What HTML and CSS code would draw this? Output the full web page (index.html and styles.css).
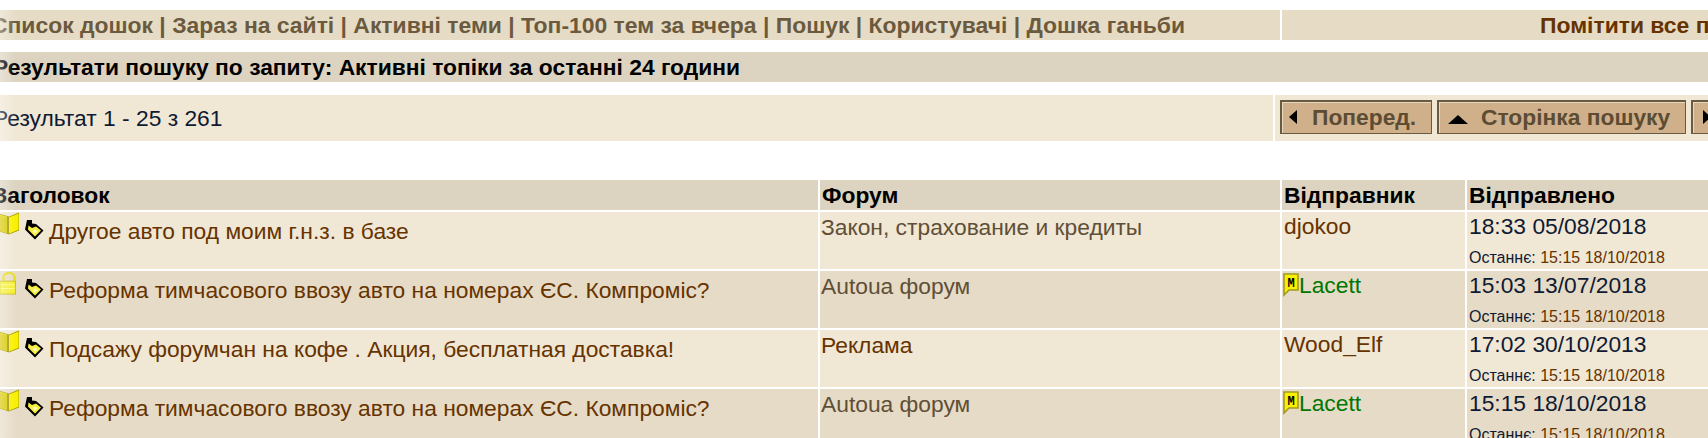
FILE: index.html
```html
<!DOCTYPE html>
<html lang="uk">

<head>
  <title>Активні теми</title>
  <meta charset="UTF-8">
  <link rel="stylesheet" href="styles.css">
</head>

<body>
  <svg class="defs" width="0" height="0">
    <symbol id="book" viewBox="0 0 20 24">
      <path d="M0 2 L10 5 L20 1 L20 18 L10 22 L0 19 Z" fill="#f8f000" stroke="#a8a000" stroke-width="1"/>
      <path d="M0 3 L8 5.5 L8 21 L0 19 Z" fill="#d8c800"/>
      <path d="M9 5 L9 22" stroke="#8c8400" stroke-width="1.6"/>
    </symbol>
    <symbol id="lock" viewBox="0 0 20 26">
      <path d="M4 12 V7 a6 5 0 0 1 12 0 V12" fill="none" stroke="#e6dc20" stroke-width="2.6"/>
      <rect x="0" y="11" width="17" height="14" fill="#f4ee30" stroke="#c8bc10"/>
      <path d="M1 15 H16 M1 19 H16" stroke="#fffa90"/>
    </symbol>
    <symbol id="go" viewBox="0 0 20 20">
      <path d="M3 0 L8 0 L8 3.5 L12 4 L19.5 10.5 L11 19.5 L1 9.5 Z" fill="#000"/>
      <path d="M4.5 5.5 L8 8 L12 6.5 L17 10.5 L11 16.5 L4 9.5 Z" fill="#f8f040"/>
      <path d="M8.5 11 L11 9.5 L13.5 11 L11 13.5 Z" fill="#fffcc0"/>
    </symbol>
    <symbol id="mod" viewBox="0 0 16 24">
      <path d="M1 1 H15 V17 H6 L1 22 Z" fill="#fbf000" stroke="#a09a20" stroke-width="1.6"/>
      <text x="8" y="14" class="mod-letter">M</text>
    </symbol>
  </svg>

  <div class="page">

    <table class="bar nav">
      <tr>
        <td class="nav-links">
          <a>Список дошок</a> | <a>Зараз на сайті</a> | <a>Активні теми</a> | <a>Топ-100 тем за вчера</a> | <a>Пошук</a> | <a>Користувачі</a> | <a>Дошка ганьби</a>
        </td>
        <td class="nav-mark"><a>Помітити все прочитаним</a></td>
      </tr>
    </table>

    <div class="search-title">Результати пошуку по запиту: Активні топіки за останні 24 години</div>

    <table class="bar pager">
      <tr>
        <td class="pager-count">Результат 1 - 25 з 261</td>
        <td class="pager-cell">
          <div class="pager-buttons">
            <a class="btn btn-prev"><span class="arrow-left"></span>Поперед.</a>
            <a class="btn btn-search"><span class="arrow-up"></span>Сторінка пошуку</a>
            <a class="btn btn-next"><span class="arrow-right"></span>Наступ.</a>
          </div>
        </td>
      </tr>
    </table>

    <table class="topics">
      <colgroup>
        <col class="col-title">
        <col class="col-forum">
        <col class="col-author">
        <col class="col-date">
      </colgroup>
      <tr>
        <th>Заголовок</th>
        <th>Форум</th>
        <th>Відправник</th>
        <th>Відправлено</th>
      </tr>
      <tr class="light">
        <td class="title"><svg class="ico-book"><use href="#book"/></svg><svg class="ico-go"><use href="#go"/></svg><a>Другое авто под моим г.н.з. в базе</a></td>
        <td class="forum">Закон, страхование и кредиты</td>
        <td class="author">djokoo</td>
        <td class="date">18:33 05/08/2018<div class="last">Останнє: <a>15:15 18/10/2018</a></div></td>
      </tr>
      <tr class="dark">
        <td class="title"><svg class="ico-book"><use href="#lock"/></svg><svg class="ico-go"><use href="#go"/></svg><a>Реформа тимчасового ввозу авто на номерах ЄС. Компроміс?</a></td>
        <td class="forum">Autoua форум</td>
        <td class="author mod"><svg class="ico-mod"><use href="#mod"/></svg>Lacett</td>
        <td class="date">15:03 13/07/2018<div class="last">Останнє: <a>15:15 18/10/2018</a></div></td>
      </tr>
      <tr class="light">
        <td class="title"><svg class="ico-book"><use href="#book"/></svg><svg class="ico-go"><use href="#go"/></svg><a>Подсажу форумчан на кофе . Акция, бесплатная доставка!</a></td>
        <td class="forum visited">Реклама</td>
        <td class="author">Wood_Elf</td>
        <td class="date">17:02 30/10/2013<div class="last">Останнє: <a>15:15 18/10/2018</a></div></td>
      </tr>
      <tr class="dark">
        <td class="title"><svg class="ico-book"><use href="#book"/></svg><svg class="ico-go"><use href="#go"/></svg><a>Реформа тимчасового ввозу авто на номерах ЄС. Компроміс?</a></td>
        <td class="forum">Autoua форум</td>
        <td class="author mod"><svg class="ico-mod"><use href="#mod"/></svg>Lacett</td>
        <td class="date">15:15 18/10/2018<div class="last">Останнє: <a>15:15 18/10/2018</a></div></td>
      </tr>
    </table>

  </div>

  <div class="edge"></div>
</body>

</html>
```

FILE: styles.css
```css
* {
  box-sizing: border-box;
}

html,
body {
  height: 100%;
  overflow: hidden;
}

body {
  margin: 0;
  background-color: #fff;
  font-family: "Liberation Sans", Arial, Helvetica, sans-serif;
  font-size: 22.8px;
  color: #0f1a33;
}

.defs {
  position: absolute;
}

/* The screenshot is scrolled a bit to the right, so the page starts off screen */
.page {
  width: 2000px;
  margin-left: -7px;
  padding-top: 10px;
}

table {
  border-collapse: separate;
  border-spacing: 0;
  table-layout: fixed;
  width: 100%;
}

td,
th {
  padding: 0;
}

/* Top links */
.nav td {
  height: 30px;
  background-color: #e6dcc5;
  font-weight: bold;
  font-size: 22.9px;
  color: #6b5a3e;
  vertical-align: middle;
}

.nav-links {
  width: 1289px;
  border-right: 2px solid #fff;
  text-indent: -2px;
}

.nav-mark {
  padding-left: 258px !important;
  color: #663300 !important;
  white-space: nowrap;
}

/* Search heading */
.search-title {
  height: 30px;
  line-height: 30px;
  margin-top: 12px;
  background-color: #dcd3c0;
  font-weight: bold;
  color: #000;
}

/* Pager */
.pager {
  margin-top: 13px;
}

.pager td {
  height: 46px;
  background-color: #f0e7d5;
  vertical-align: middle;
}

.pager-count {
  width: 1282px;
  border-right: 2px solid #fff;
}

.pager td.pager-cell {
  padding: 5px 0 0 5px;
  vertical-align: top;
}

.pager-buttons {
  display: flex;
  gap: 5px;
}

.btn {
  flex: none;
  height: 34px;
  line-height: 30px;
  padding: 0 6px 0 7px;
  background-color: #cfb08a;
  border: 1px solid #6b5a42;
  border-top-width: 2px;
  border-left-width: 2px;
  box-shadow: inset 1px 1px 0 #e6d7bd;
  font-weight: bold;
  color: #5c4c33;
  white-space: nowrap;
}

.btn-prev {
  width: 152px;
}

.btn-search {
  width: 249px;
}

.btn-next {
  width: 150px;
}

.arrow-left,
.arrow-up,
.arrow-right {
  display: inline-block;
  vertical-align: 1px;
}

.arrow-left {
  margin-right: 15px;
  border-top: 7px solid transparent;
  border-bottom: 7px solid transparent;
  border-right: 8px solid #000;
}

.arrow-right {
  margin-left: 3px;
  margin-right: 13px;
  border-top: 7px solid transparent;
  border-bottom: 7px solid transparent;
  border-left: 8px solid #000;
}

.arrow-up {
  margin-left: 2px;
  margin-right: 13px;
  border-left: 10px solid transparent;
  border-right: 10px solid transparent;
  border-bottom: 9px solid #000;
}

/* Topic list */
.topics {
  margin-top: 37px;
  border-spacing: 2px;
  margin-left: 1px;
  width: 1900px;
}

.col-title {
  width: 822px;
}

.col-forum {
  width: 460px;
}

.col-author {
  width: 183px;
}

.topics th {
  height: 30px;
  padding-left: 2px;
  background-color: #dcd3c0;
  text-align: left;
  font-size: 22.8px;
  color: #000;
}

.topics th:first-child {
  padding-left: 0;
  text-indent: -3px;
}

.topics td {
  height: 57px;
  padding: 2px 2px 0;
  vertical-align: top;
  font-size: 22.8px;
  line-height: 26px;
}

.light td {
  background-color: #f0e7d5;
}

.dark td {
  background-color: #e6dbc6;
}

.topics td.title {
  padding: 0 0 0 3px;
  color: #663300;
  white-space: nowrap;
}

.title a {
  line-height: 32px;
}

.ico-book {
  width: 20px;
  height: 24px;
  vertical-align: 3px;
}

.ico-go {
  width: 20px;
  height: 20px;
  margin: 0 5px;
  vertical-align: -1px;
}

.ico-mod {
  width: 16px;
  height: 24px;
  margin-left: -1px;
  vertical-align: -4px;
}

.mod-letter {
  font-family: "Liberation Mono", monospace;
  font-size: 12px;
  font-weight: bold;
  text-anchor: middle;
  fill: #000;
}

.topics td.forum {
  padding: 2px 1px 0;
  color: #5f4f37;
}

.topics td.visited {
  color: #663300;
}

.topics td.author {
  padding-top: 1px;
  color: #663300;
}

.topics td.author.mod {
  color: #007700;
}

.topics td.date {
  padding-top: 1px;
}

.last {
  margin-top: 9px;
  font-size: 16px;
  line-height: 20px;
}

.last a {
  color: #663300;
}

/* Faint fade on the left edge of the window */
.edge {
  position: absolute;
  left: 0;
  top: 0;
  bottom: 0;
  width: 16px;
  background: linear-gradient(to right, rgba(255, 255, 255, 0.35), rgba(255, 255, 255, 0));
}
```
